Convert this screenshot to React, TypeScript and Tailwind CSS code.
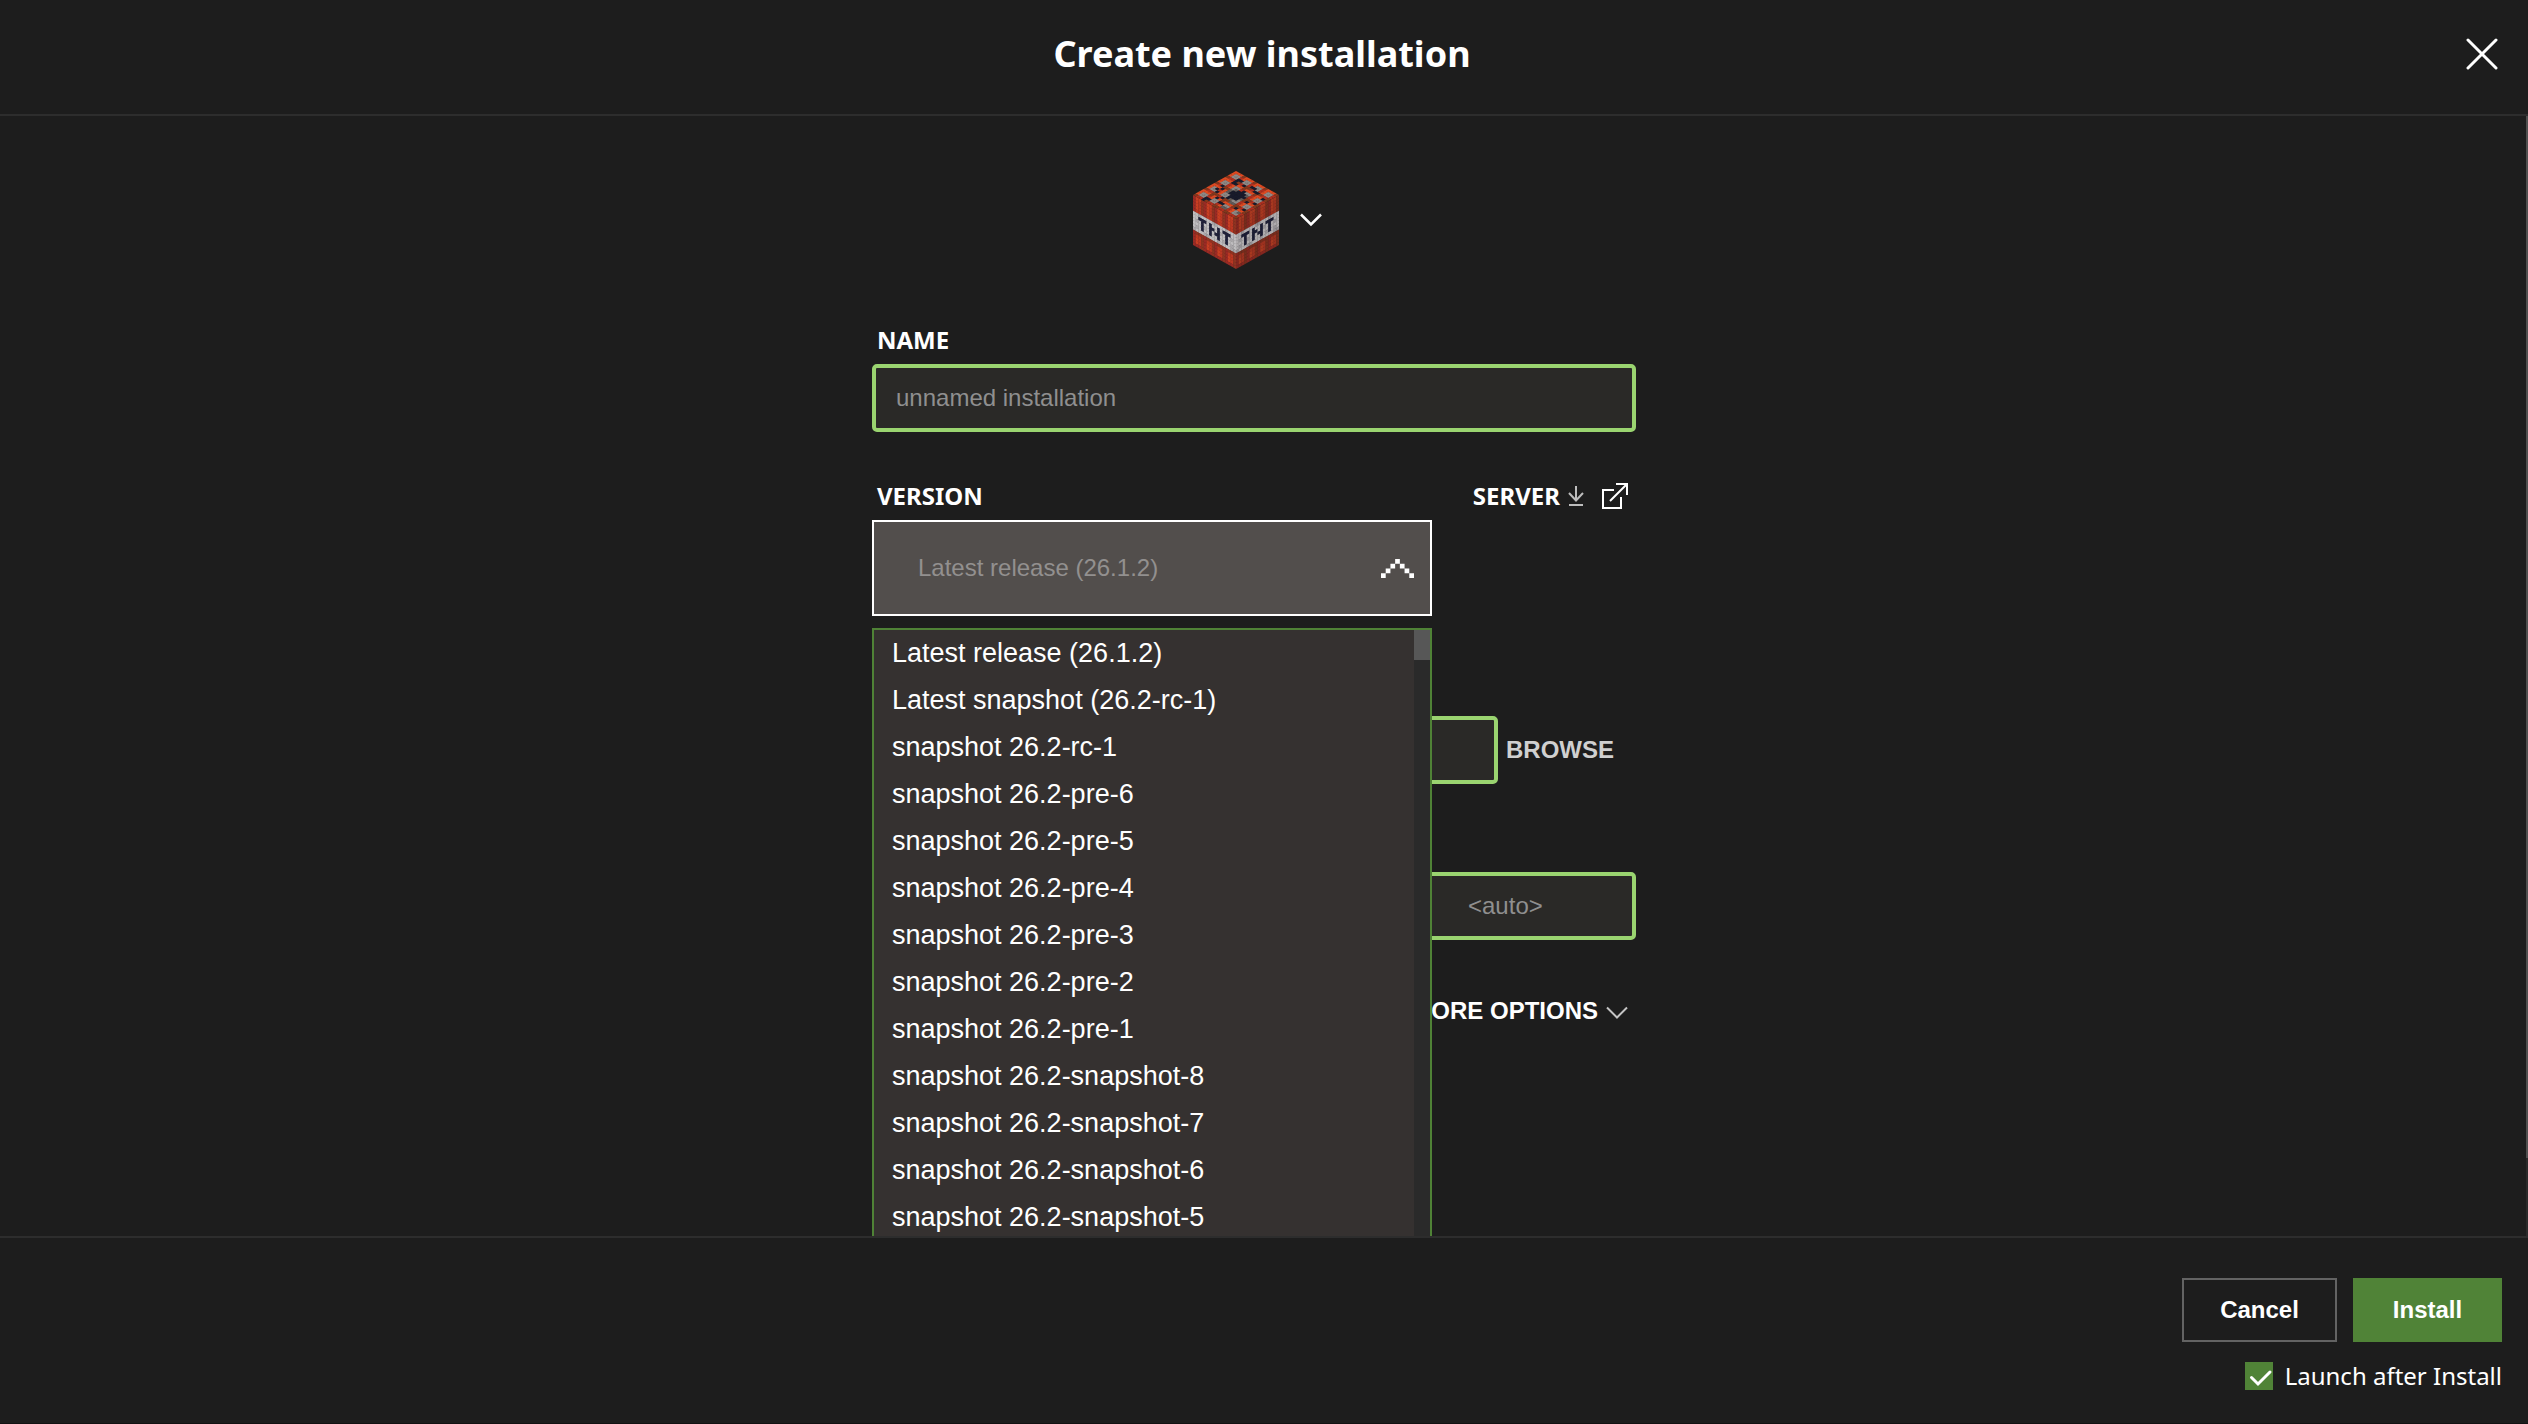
import * as React from "react";
import clsx from "clsx";

const VERSIONS = [
  "Latest release (26.1.2)",
  "Latest snapshot (26.2-rc-1)",
  "snapshot 26.2-rc-1",
  "snapshot 26.2-pre-6",
  "snapshot 26.2-pre-5",
  "snapshot 26.2-pre-4",
  "snapshot 26.2-pre-3",
  "snapshot 26.2-pre-2",
  "snapshot 26.2-pre-1",
  "snapshot 26.2-snapshot-8",
  "snapshot 26.2-snapshot-7",
  "snapshot 26.2-snapshot-6",
  "snapshot 26.2-snapshot-5",
];

const SANS = "font-['Liberation_Sans',Arial,sans-serif]";
const LABEL = "pl-[5px] text-2xl leading-8 font-bold text-white";
const FIELD = clsx(
  SANS,
  "h-[68px] rounded-[5px] border-4 border-[#9ad470] bg-[#2a2927] text-2xl text-white outline-none",
  "placeholder:text-[#8f8f8f] placeholder:opacity-100",
);

// 16x16 block textures, one character per texel
const TNT_TOP = [
  "ooobooobooobooob",
  "oggroggroggroggr",
  "oggkkggrkkgroggr",
  "brrkbrkbbrkkbrrb",
  "oookkoobooobookb",
  "oggroggrkggroggr",
  "oggrogdkkkdroggr",
  "brkbbdkkkkkbbrkb",
  "oookodkkkkdbkoob",
  "ogkroggkkkgroggr",
  "oggkoggkdggroggr",
  "brrbbrkbbddbbrkb",
  "ooobokobooobkoob",
  "oggroggkkggrogdr",
  "oggkkggroddroggr",
  "brrkbrrbbrrbbrrb",
];

const TNT_SIDE = [
  "roobroobroobroob",
  "rosbrosbrosbrosb",
  "rosbrosbrosbrosb",
  "rosbrosbrosbrosb",
  "rssbrssbrssbrssb",
  "wwvwwwwvvwwwvwww",
  "wwkkkwkwwkwkkkww",
  "wvwkwwkkwkvwkwvw",
  "wwwkvwkwkkwwkwww",
  "wvwkwwkwwkwvkwvw",
  "vwwwvvwwwvwwwwvv",
  "rbbbrbbbrbbbrbbb",
  "rssbrssbrssbrssb",
  "rosbrosbrosbrosb",
  "rosbrosbrosbrosb",
  "rrrbrrrbrrrbrrrb",
];

const TOP_COLORS: Record<string, string> = {
  o: "#de4a22",
  r: "#b0301f",
  b: "#84381d",
  g: "#8f8885",
  d: "#605a58",
  k: "#191a2b",
};
const LEFT_COLORS: Record<string, string> = {
  r: "#9a2a24",
  o: "#c83e23",
  s: "#bb3722",
  b: "#8f3321",
  w: "#bfbdbf",
  v: "#a9a6a9",
  k: "#20213a",
};
const RIGHT_COLORS: Record<string, string> = {
  r: "#84261f",
  o: "#a83820",
  s: "#9c311f",
  b: "#762c1c",
  w: "#aeabad",
  v: "#939094",
  k: "#1c1d34",
};

function Face({
  rows,
  colors,
  transform,
}: {
  rows: string[];
  colors: Record<string, string>;
  transform: string;
}) {
  return (
    <g transform={transform}>
      {rows.map((row, y) =>
        row.split("").map((c, x) => (
          <rect
            key={`${x}-${y}`}
            x={x}
            y={y}
            width={x < 15 ? 1.08 : 1}
            height={y < 15 ? 1.08 : 1}
            fill={colors[c]}
          />
        )),
      )}
    </g>
  );
}

function TntBlock() {
  return (
    <svg width="86" height="98" viewBox="0 0 86 98" aria-hidden="true">
      <Face rows={TNT_SIDE} colors={LEFT_COLORS} transform="matrix(2.6875 1.5 0 3.125 0 24)" />
      <Face rows={TNT_SIDE} colors={RIGHT_COLORS} transform="matrix(2.6875 -1.5 0 3.125 43 48)" />
      <Face rows={TNT_TOP} colors={TOP_COLORS} transform="matrix(2.6875 1.5 -2.6875 1.5 43 0)" />
    </svg>
  );
}

function ChevronDown({ className }: { className?: string }) {
  return (
    <svg
      width="22"
      height="14"
      viewBox="0 0 22 14"
      fill="none"
      stroke="currentColor"
      className={className}
      aria-hidden="true"
    >
      <path d="M1 1.5 11 11.5 21 1.5" />
    </svg>
  );
}

function PixelChevron({ open }: { open: boolean }) {
  return (
    <svg
      width="33"
      height="19"
      viewBox="0 0 7 4"
      preserveAspectRatio="none"
      fill="#fff"
      className={clsx(!open && "rotate-180")}
      aria-hidden="true"
    >
      <path d="M3 0h1v1h1v1h1v1h1v1h-1v-1h-1v-1h-1v-1h-1v1h-1v1h-1v1h-1v-1h1v-1h1v-1h1z" />
    </svg>
  );
}

function VersionPicker() {
  const [open, setOpen] = React.useState(true);
  const [version, setVersion] = React.useState(VERSIONS[0]);

  const pick = (v: string) => {
    setVersion(v);
    setOpen(false);
  };

  return (
    <div className={clsx(SANS, "relative mt-2 w-[560px]")}>
      <button
        type="button"
        aria-haspopup="listbox"
        aria-expanded={open}
        aria-labelledby="version-label"
        onClick={() => setOpen(!open)}
        className="flex h-24 w-full items-center justify-between border-2 border-white bg-[#524e4c] pr-4 pl-11 text-2xl text-[#92908f]"
      >
        {version}
        <PixelChevron open={open} />
      </button>
      {open && (
        <div className="absolute inset-x-0 top-full z-10 mt-3 flex border-2 border-[#4f8236] bg-[#353130]">
          <ul role="listbox" aria-labelledby="version-label" className="flex-1">
            {VERSIONS.map((v) => (
              <li
                key={v}
                role="option"
                aria-selected={v === version}
                onClick={() => pick(v)}
                className="h-[47px] cursor-pointer pl-[18px] text-[27px] leading-[47px] text-white hover:bg-[#524e4c]"
              >
                {v}
              </li>
            ))}
          </ul>
          <div className="w-4 bg-[#2a2a2a]">
            <div className="h-[30px] bg-[#575757]" />
          </div>
        </div>
      )}
    </div>
  );
}

function ServerLinks() {
  return (
    <div className="flex items-center pr-2 text-white">
      <a href="#server" className="flex items-center gap-2 text-2xl leading-8 font-bold">
        SERVER
        <svg
          width="16"
          height="20"
          viewBox="0 0 16 20"
          fill="none"
          stroke="#bdbdbd"
          strokeWidth="2"
          aria-hidden="true"
        >
          <path d="M8 0v15M1 7l7 7.5L15 7M1 19h14" />
        </svg>
      </a>
      <a href="#server-page" aria-label="Open server page" className="ml-[18px]">
        <svg
          width="26"
          height="26"
          viewBox="0 0 26 26"
          fill="none"
          stroke="currentColor"
          strokeWidth="2"
          aria-hidden="true"
        >
          <path d="M12 7H1v18h18V14M14 1h11v11M8 18 24 2" />
        </svg>
      </a>
    </div>
  );
}

export default function App() {
  const [launch, setLaunch] = React.useState(true);

  return (
    <div className="flex h-screen flex-col border-b border-[#121212] bg-[#1d1d1d] font-['Noto_Sans',sans-serif] text-white">
      <header className="grid shrink-0 grid-cols-[1fr_auto_1fr] items-center border-b-2 border-[#2d2d2d] pt-[23px] pr-[30px] pb-[29px] pl-[26px]">
        <h1 className="col-start-2 text-4xl leading-[62px] font-bold">Create new installation</h1>
        <button type="button" aria-label="Close" className="justify-self-end">
          <svg
            width="32"
            height="32"
            viewBox="0 0 32 32"
            stroke="currentColor"
            strokeWidth="3"
            strokeLinecap="round"
            aria-hidden="true"
          >
            <path d="M2 2 30 30M30 2 2 30" />
          </svg>
        </button>
      </header>

      <main className="flex min-h-0 flex-1 overflow-hidden">
        <form className="flex flex-1 flex-col items-center pt-[55px] pr-[18px]">
          <button
            type="button"
            aria-label="Choose icon"
            className="mb-[55px] flex items-center gap-[21px] pl-[6px]"
          >
            <TntBlock />
            <ChevronDown className="stroke-[2.5]" />
          </button>

          <div className="flex w-[764px] flex-col">
            <label htmlFor="name" className={LABEL}>
              NAME
            </label>
            <input
              id="name"
              type="text"
              placeholder="unnamed installation"
              className={clsx(FIELD, "mt-2 px-5")}
            />

            <div className="mt-12 flex items-center justify-between">
              <span id="version-label" className={LABEL}>
                VERSION
              </span>
              <ServerLinks />
            </div>
            <VersionPicker />

            <div className="mt-[100px] flex items-center gap-2">
              <input
                type="text"
                aria-label="Game directory"
                className={clsx(FIELD, "w-[626px] px-5")}
              />
              <button type="button" className={clsx(SANS, "text-2xl font-bold text-[#d0d0d0]")}>
                BROWSE
              </button>
            </div>

            <input
              type="text"
              aria-label="Resolution"
              placeholder="<auto>"
              className={clsx(FIELD, "mt-[88px] pl-[592px]")}
            />

            <button
              type="button"
              className={clsx(
                SANS,
                "mt-[55px] flex items-center gap-2 self-end pr-2 text-2xl leading-8 font-bold",
              )}
            >
              MORE OPTIONS
              <ChevronDown className="mt-1 stroke-2 text-[#c4c4c4]" />
            </button>
          </div>
        </form>
        <div className="w-[2px] bg-[#2a2a2a] pb-[78px]">
          <div className="h-full bg-[#4f4f4f]" />
        </div>
      </main>

      <footer className="flex shrink-0 flex-col items-end border-t-2 border-[#2d2d2d] pt-10 pr-[26px] pb-[33px]">
        <div className={clsx(SANS, "flex gap-4 text-2xl font-bold")}>
          <button type="button" className="h-16 w-[155px] border-2 border-[#636363]">
            Cancel
          </button>
          <button type="button" className="h-16 w-[149px] bg-[#508337]">
            Install
          </button>
        </div>
        <div className="mt-5 flex items-center gap-3">
          <div className="grid">
            <input
              id="launch"
              type="checkbox"
              checked={launch}
              onChange={(e) => setLaunch(e.target.checked)}
              className="col-start-1 row-start-1 size-7 appearance-none border-2 border-[#508337] checked:bg-[#508337]"
            />
            {launch && (
              <svg
                viewBox="0 0 28 28"
                fill="none"
                stroke="#fff"
                strokeWidth="3"
                strokeLinecap="round"
                className="pointer-events-none col-start-1 row-start-1 size-7"
                aria-hidden="true"
              >
                <path d="m6.500 15.500 6.500 6.500L25 10" />
              </svg>
            )}
          </div>
          <label htmlFor="launch" className="text-2xl leading-7">
            Launch after Install
          </label>
        </div>
      </footer>
    </div>
  );
}
